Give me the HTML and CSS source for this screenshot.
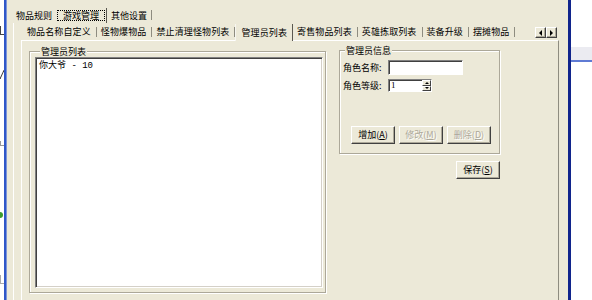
FILE: index.html
```html
<!DOCTYPE html>
<html lang="zh-CN">
<head>
  <meta charset="UTF-8">
  <title>游戏管理</title>
  <link rel="stylesheet" href="styles.css">
</head>
<body>
  <div class="desk-left">
    <div class="frag f1"></div>
    <div class="frag f2"></div>
    <div class="frag f3"></div>
    <div class="dot"></div>
    <div class="frag f4"></div>
  </div>
  <div class="frame-l"></div>

  <div class="window">
    <div class="otabs">
      <span class="otab">物品规则</span>
      <span class="otab on"><span class="focus">游戏管理</span></span>
      <span class="otab sep">其他设置</span>
    </div>

    <div class="opanel">
      <div class="itabs">
        <span class="itab">物品名称自定义</span>
        <span class="itab">怪物爆物品</span>
        <span class="itab">禁止清理怪物列表</span>
        <span class="itab on">管理员列表</span>
        <span class="itab">寄售物品列表</span>
        <span class="itab">英雄拣取列表</span>
        <span class="itab">装备升级</span>
        <span class="itab">摆摊物品</span>
        <div class="arrows">
          <div class="arr"><i class="tri-l"></i></div>
          <div class="arr"><i class="tri-r"></i></div>
        </div>
      </div>

      <div class="ipanel">
        <fieldset class="group list-group">
          <legend>管理员列表</legend>
          <div class="listbox">
            <div class="item">你大爷<span class="num"> - 10</span></div>
          </div>
        </fieldset>

        <div class="side">
          <fieldset class="group info-group">
            <legend>管理员信息</legend>
            <div class="row first">
              <label class="lbl">角色名称:</label>
              <div class="edit name"></div>
            </div>
            <div class="row">
              <label class="lbl">角色等级:</label>
              <div class="edit spin">
                <span class="val">1</span>
                <div class="updown">
                  <div class="ud"><i class="tri-u"></i></div>
                  <div class="ud"><i class="tri-d"></i></div>
                </div>
              </div>
            </div>
            <div class="btns">
              <button class="btn">增加(<u>A</u>)</button>
              <button class="btn" disabled>修改(<u>M</u>)</button>
              <button class="btn" disabled>删除(<u>D</u>)</button>
            </div>
          </fieldset>
          <button class="btn save">保存(<u>S</u>)</button>
        </div>
      </div>
    </div>
  </div>

  <div class="frame-r"></div>
  <div class="desk-right">
    <div class="band"></div>
  </div>
</body>
</html>
```

FILE: styles.css
```css
body {
  margin: 0;
  width: 592px;
  height: 300px;
  overflow: hidden;
  display: flex;
  background: #fff;
  font-family: "Noto Sans CJK SC", "DejaVu Sans", sans-serif;
  font-size: 9px;
  color: #000;
}

/* bits of the window behind */
.desk-left {
  width: 4px;
  overflow: hidden;
  background: #fff;
  display: flex;
  flex-direction: column;
}
.frag {
  width: 3px;
  border-left: 1px solid #444;
  border-bottom: 1px solid #444;
}
.f1 { margin-top: 26px; height: 8px; }
.f2 { margin-top: 33px; height: 10px; border-left: none; width: 2px; transform: skewX(-25deg); border-right: 1px solid #333; }
.f3 { margin-top: 62px; height: 4px; border-color: #999; }
.f4 { margin-top: 57px; height: 8px; border-color: #aaa; }
.dot {
  margin-top: 66px;
  margin-left: -3px;
  width: 6px;
  height: 6px;
  border-radius: 50%;
  background: #3c9c2c;
}
.frame-l {
  width: 3px;
  background: #2f57c8;
  border-right: 1px solid #7c95d8;
  box-sizing: border-box;
}
.frame-r {
  width: 3px;
  background: #10248c;
}
.desk-right {
  flex: 1;
  background: #fff;
}
.band {
  margin-top: 47px;
  height: 13px;
  background: #ebebf1;
  border-bottom: 2px solid #5f7bd4;
}

/* window */
.window {
  width: 561px;
  flex: none;
  background: #ece9d8;
  display: flex;
  flex-direction: column;
}
.otabs {
  display: flex;
  height: 15px;
  margin-top: 8px;
  padding-left: 5px;
  line-height: 11px;
}
.otab {
  padding: 2px 4px 0 4px;
}
.otab.on {
  padding: 0 1px 0 0;
  margin-left: 1px;
  border-right: 1px solid #5a5850;
  display: flex;
  align-items: center;
}
.focus {
  border: 1px dotted #000;
  padding: 0 5px;
  line-height: 9px;
}
.otab.sep {
  margin-top: 2px;
  padding: 0 4px;
  height: 10px;
  border-right: 1px solid #8e8c80;
}

.opanel {
  flex: 1;
  margin-left: 6px;
  border-left: 1px solid #fff;
  padding-left: 7px;
  display: flex;
  flex-direction: column;
}
.itabs {
  display: flex;
  align-items: center;
  width: 537px;
  height: 16px;
  margin-top: 1px;
  padding-left: 2px;
  box-sizing: border-box;
  letter-spacing: 0.12px;
}
.itab {
  padding: 0 5px 0 4px;
  line-height: 10px;
  border-right: 1px solid #8e8c80;
  white-space: nowrap;
}
.itab.on {
  align-self: stretch;
  display: flex;
  align-items: center;
  padding: 0 5px;
  margin-bottom: -1px;
  background: #ece9d8;
  border-left: 1px solid #f7f6f0;
  border-right: 1px solid #5a5850;
  position: relative;
  z-index: 1;
}
.arrows {
  margin-left: auto;
  margin-right: 1px;
  align-self: flex-start;
  margin-top: 3px;
  display: flex;
}
.arr {
  width: 11px;
  height: 11px;
  box-sizing: border-box;
  border: 1px solid;
  border-color: #fff #404040 #404040 #fff;
  box-shadow: inset -1px -1px #aca899;
  display: flex;
  align-items: center;
  justify-content: center;
}
.tri-l, .tri-r, .tri-u, .tri-d {
  width: 0;
  height: 0;
  border: 0 solid transparent;
}
.tri-l { border-width: 3px 3px 3px 0; border-right-color: #000; }
.tri-r { border-width: 3px 0 3px 3px; border-left-color: #000; }
.tri-u { border-width: 0 2px 2px 2px; border-bottom-color: #000; }
.tri-d { border-width: 2px 2px 0 2px; border-top-color: #000; }

.ipanel {
  flex: 1;
  width: 538px;
  box-sizing: border-box;
  border-top: 1px solid #fff;
  border-left: 1px solid #fff;
  border-right: 1px solid #8e8c80;
  display: flex;
  align-items: flex-start;
}

/* group boxes */
.group {
  margin: 0;
  box-sizing: border-box;
  border: 1px solid #aca899;
  box-shadow: inset 1px 1px #fff, 1px 1px #fff;
}
.group legend {
  margin-left: 5px;
  padding: 0 1px;
  line-height: 11px;
  background: #ece9d8;
}
.list-group {
  width: 297px;
  margin: 5px 0 0 7px;
  padding: 0 2px 4px 5px;
}
.listbox {
  height: 231px;
  box-sizing: border-box;
  background: #fff;
  border: 1px solid;
  border-color: #808080 #fff #fff #808080;
  box-shadow: inset 1px 1px #404040, inset -1px -1px #d4d0c8;
  padding: 2px 3px;
}
.item {
  line-height: 10px;
}
.num {
  white-space: pre;
  font-family: "Liberation Mono", monospace;
  font-size: 9px;
}

.side {
  margin: 4px 0 0 13px;
  display: flex;
  flex-direction: column;
  align-items: flex-end;
  gap: 7px;
}
.info-group {
  width: 161px;
  padding: 0 0 9px 0;
}
.row {
  display: flex;
  align-items: center;
  margin: 4px 0 0 3px;
}
.lbl {
  width: 45px;
  line-height: 10px;
}
.edit {
  box-sizing: border-box;
  background: #fff;
  border: 1px solid;
  border-color: #808080 #fff #fff #808080;
  box-shadow: inset 1px 1px #404040;
}
.name {
  width: 75px;
  height: 15px;
}
.spin {
  width: 44px;
  height: 13px;
  display: flex;
  justify-content: space-between;
}
.val {
  padding: 1px 0 0 2px;
  line-height: 9px;
  font-family: "Liberation Serif", serif;
}
.updown {
  width: 9px;
  display: flex;
  flex-direction: column;
}
.ud {
  flex: 1;
  background: #ece9d8;
  border: 1px solid;
  border-color: #fff #404040 #404040 #fff;
  display: flex;
  align-items: center;
  justify-content: center;
}
.btns {
  display: flex;
  gap: 4px;
  margin: 34px 0 0 11px;
}
.btn {
  width: 44px;
  height: 18px;
  padding: 0;
  box-sizing: border-box;
  background: #ece9d8;
  border: 1px solid;
  border-color: #fff #404040 #404040 #fff;
  box-shadow: inset -1px -1px #aca899;
  font-family: inherit;
  font-size: 9px;
  line-height: 10px;
  color: #000;
}
.btn:disabled {
  color: #aca899;
  text-shadow: 1px 1px #fff;
}
```
